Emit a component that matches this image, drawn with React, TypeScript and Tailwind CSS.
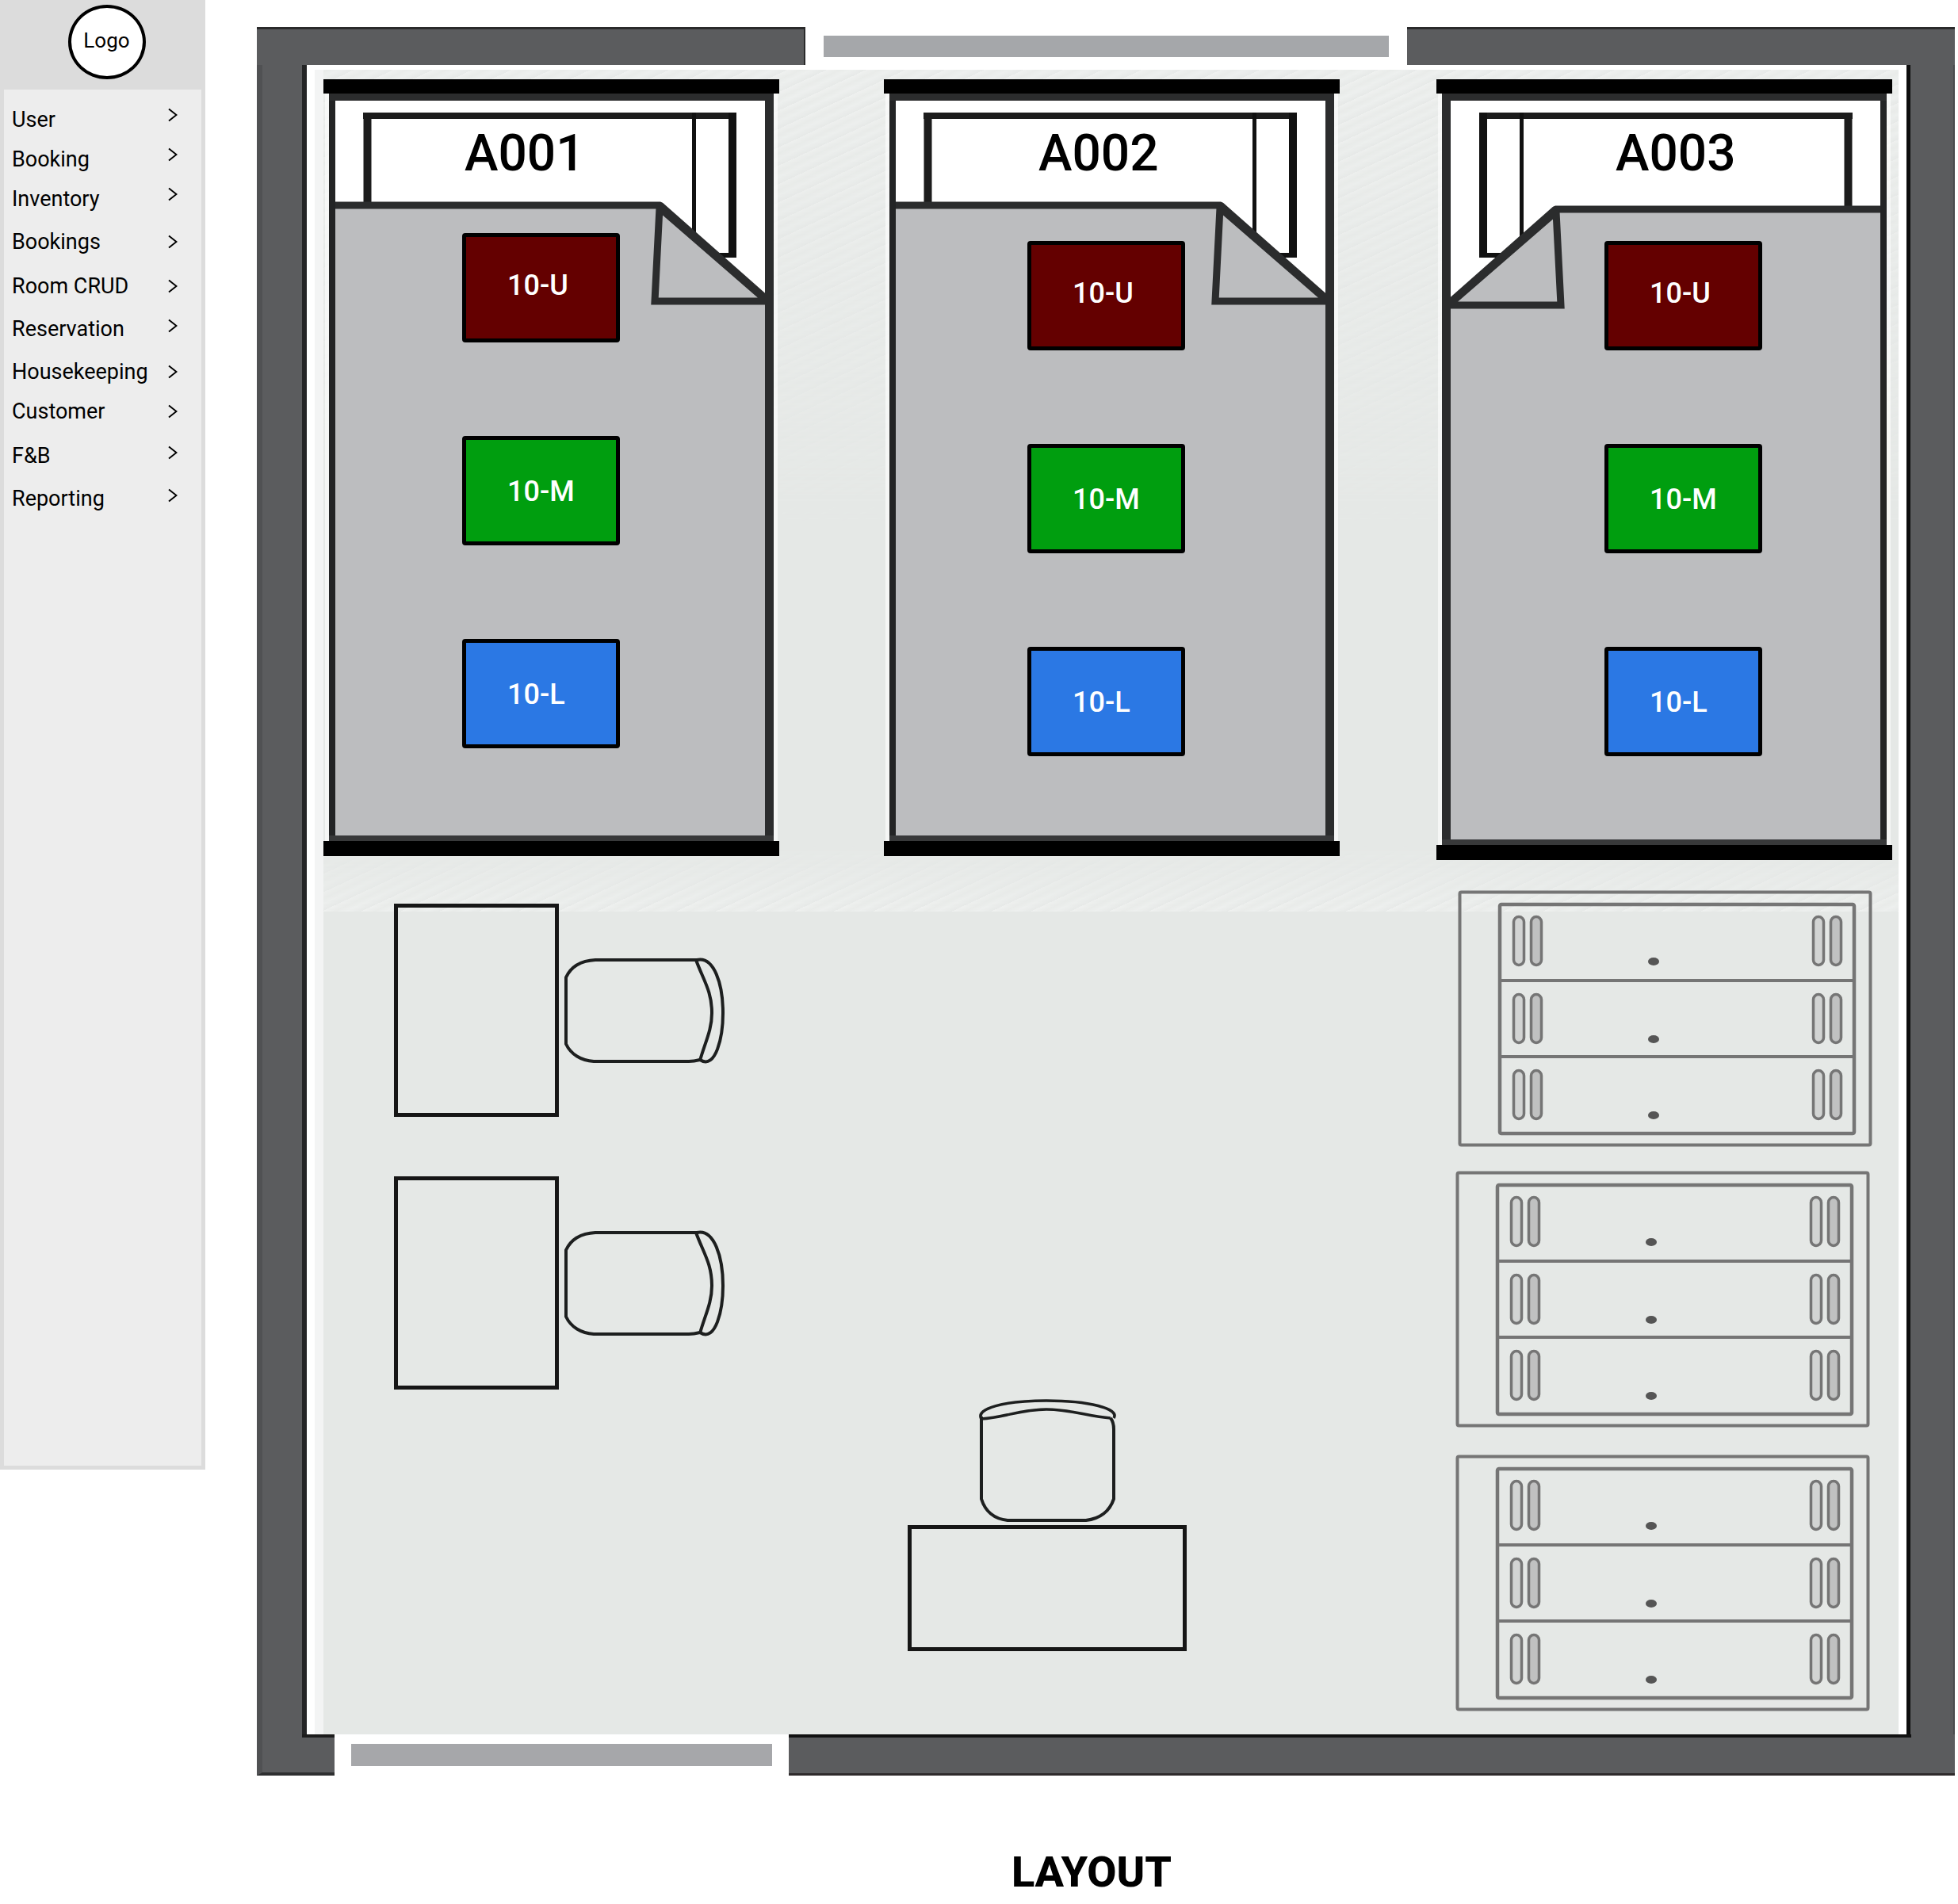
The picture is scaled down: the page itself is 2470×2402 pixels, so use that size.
import React from "react";

type NavItem = { label: string; row: string; chevron: string };

const NAV: NavItem[] = [
  { label: "User", row: "h-[50px]", chevron: "h-5" },
  { label: "Booking", row: "h-[50px]", chevron: "h-5" },
  { label: "Inventory", row: "h-[54px]", chevron: "h-5" },
  { label: "Bookings", row: "h-[56px]", chevron: "h-8" },
  { label: "Room CRUD", row: "h-[54px]", chevron: "h-8" },
  { label: "Reservation", row: "h-[54px]", chevron: "h-6" },
  { label: "Housekeeping", row: "h-[50px]", chevron: "h-8" },
  { label: "Customer", row: "h-[56px]", chevron: "h-8" },
  { label: "F&B", row: "h-[54px]", chevron: "h-6" },
  { label: "Reporting", row: "h-[54px]", chevron: "h-6" },
];

function Chevron() {
  return (
    <svg viewBox="0 0 12 18" className="h-[18px] w-3" fill="none" stroke="#000" strokeWidth="2" aria-hidden="true">
      <path d="M1 1.5 L10.5 9 L1 16.5" />
    </svg>
  );
}

function Sidebar() {
  return (
    <aside className="flex min-h-[1854px] w-[259px] shrink-0 flex-col border-x-[5px] border-b-[5px] border-[#dcdcdc] bg-[#ededed]">
      <header className="flex h-[113px] items-start justify-center bg-[#dcdcdc] pt-[6px] pl-[10px]">
        <div className="flex h-[94px] w-[98px] items-center justify-center rounded-[50%] border-4 border-black bg-white pb-1 text-[26px] leading-8">
          Logo
        </div>
      </header>
      <nav className="pt-[22px]" aria-label="Main">
        <ul>
          {NAV.map((item) => (
            <li key={item.label} className={item.row}>
              <a href="#" className="flex items-start justify-between pr-[30px] pl-[10px] text-[27px] leading-8">
                <span>{item.label}</span>
                <span className={`flex items-center ${item.chevron}`}>
                  <Chevron />
                </span>
              </a>
            </li>
          ))}
        </ul>
      </nav>
    </aside>
  );
}

function BedDrawing({ mirrored }: { mirrored?: boolean }) {
  const s = mirrored ? 5 : 0;
  const h = 980 + s;
  return (
    <svg viewBox={`0 0 575 ${h}`} className="absolute inset-0 size-full" aria-hidden="true">
      <g transform={mirrored ? "translate(575 0) scale(-1 1)" : undefined}>
        <rect x="2" y="0" width="571" height={h} fill="#fff" fillOpacity="0.6" />
        <rect x="7" y="18" width="561" height={h - 30} fill="#2b2c2d" />
        <rect x="15" y="27" width="542" height={h - 54} fill="#fff" />
        <path d="M55.5 165 V46" fill="none" stroke="#1c1c1c" strokeWidth="10" />
        <rect x="50" y="42" width="471" height="8" fill="#1c1c1c" />
        <rect x="465" y="42" width="5" height="176" fill="#111" />
        <rect x="511" y="42" width="10" height="183" fill="#111" />
        <rect x="490" y="219" width="31" height="6" fill="#111" />
        <path d={`M15 ${159 + s} H425 L560 ${280 + s} V${954 + s} H15 Z`} fill="#bcbdbf" />
        <path d={`M15 ${159 + s} H425 L562 ${280 + s}`} fill="none" stroke="#2b2c2d" strokeWidth="9" strokeLinejoin="bevel" />
        <path
          d={`M424 ${162 + s} L418 ${280 + s} H560 Z`}
          fill="#bcbdbf"
          stroke="#2b2c2d"
          strokeWidth="9"
          strokeLinejoin="miter"
          strokeMiterlimit="2"
        />
        <rect x="7" y="27" width="8" height={h - 46} fill="#232425" />
        <rect x="557" y="27" width="11" height={h - 46} fill="#2b2c2d" />
        <rect x="7" y={954 + s} width="561" height="8" fill="#38393a" />
        <rect x="0" y="0" width="575" height="18" fill="#000" />
        <rect x="0" y={961 + s} width="575" height="19" fill="#000" />
      </g>
    </svg>
  );
}

const BERTHS = [
  { label: "10-U", look: "bg-[#640000] pb-2" },
  { label: "10-M", look: "bg-[#009e0f]" },
  { label: "10-L", look: "bg-[#2b78e4]" },
];

type BedProps = {
  name: string;
  mirrored?: boolean;
  size: string;
  title: string;
  berths: string;
};

function Bed({ name, mirrored, size, title, berths }: BedProps) {
  return (
    <article className={`relative w-[575px] ${size}`}>
      <BedDrawing mirrored={mirrored} />
      <div className="relative">
        <h2 className={`pt-14 text-[64px] leading-[76px] font-medium ${title}`}>{name}</h2>
        <div className={`flex flex-col gap-[118px] ${berths}`}>
          {BERTHS.map((b) => (
            <button
              key={b.label}
              type="button"
              className={`flex h-[138px] w-[199px] items-center rounded-[4px] border-[5px] border-black pt-[2px] pl-[52px] text-[36px] font-medium text-white ${b.look}`}
            >
              {b.label}
            </button>
          ))}
        </div>
      </div>
    </article>
  );
}

function SideChair() {
  return (
    <svg viewBox="0 0 204 134" className="h-[134px] w-[204px]" fill="none" stroke="#1d1f1f" strokeWidth="4" aria-hidden="true">
      <path d="M168 3 H40 C22 4 9 12 3 25 V109 C9 122 22 130 38 131 H158 C164 131 168 130 172 129" />
      <path d="M167 3 C176 28 187 42 187 70 C187 92 178 108 172 130" />
      <path d="M168 3 C190 -2 201 34 201 70 C201 100 192 142 172 129" />
    </svg>
  );
}

function FrontChair() {
  return (
    <svg viewBox="0 0 176 158" className="h-[158px] w-[176px]" fill="none" stroke="#1d1f1f" strokeWidth="4" aria-hidden="true">
      <path d="M5 24 V128 C10 144 20 153 38 155 H137 C155 153 167 143 172 128 V40 C172 34 171 30 168 26" />
      <path d="M5 27 C35 25 55 15 87 15 C118 15 140 24 168 26" strokeWidth="3.5" />
      <path d="M5 27 C-3 14 34 4 87 4 C140 4 180 14 172 26" strokeWidth="3.5" />
    </svg>
  );
}

function SideDesk() {
  return (
    <div className="flex items-center gap-[6px]">
      <div className="h-[269px] w-[208px] border-[5px] border-[#161616]" />
      <SideChair />
    </div>
  );
}

const SHELF_TOPS = [32, 130, 226];
const SLOTS = [69, 91, 447, 469];

function Locker() {
  return (
    <svg viewBox="0 0 523 324" className="h-[324px] w-[523px]" fill="none" stroke="#757575" aria-hidden="true">
      <rect x="2.5" y="2.5" width="518" height="319" rx="2" strokeWidth="4" />
      <rect x="53" y="18" width="447" height="289" rx="2" strokeWidth="4.5" />
      <path d="M53 114 H500 M53 210 H500" strokeWidth="4" />
      {SHELF_TOPS.map((y) => (
        <g key={y}>
          {SLOTS.map((x, i) => (
            <rect
              key={x}
              x={x + 1.5}
              y={y + 1.5}
              width="13"
              height="61"
              rx="6.5"
              strokeWidth="3.5"
              fill={i % 2 === 0 ? "#d2d4d3" : "#c0c1c1"}
            />
          ))}
          <ellipse cx="247" cy={y + 58} rx="7" ry="5" fill="#555" stroke="none" />
        </g>
      ))}
    </svg>
  );
}

function Room() {
  return (
    <section aria-label="Room plan">
      {/* Upper wall with the window */}
      <div className="flex h-12">
        <div className="w-[692px] border-t-[3px] border-r-2 border-t-[#2a2a2b] border-r-[#2a2a2b] bg-[#5b5c5e]" />
        <div className="flex flex-1 items-start px-[23px] pt-[11px]">
          <div className="h-[27px] flex-1 bg-[#a5a7aa]" />
        </div>
        <div className="w-[691px] border-t-[3px] border-[#2a2a2b] bg-[#5b5c5e]" />
      </div>

      <div className="flex">
        <div className="w-[63px] shrink-0 border-r-[6px] border-l-[7px] border-r-[#232425] border-l-[#505153] bg-[#5b5c5e]" />

        <div className="relative flex-1 border-x-[10px] border-t-[6px] border-white bg-[#e5e8e6]">
          <div
            aria-hidden="true"
            className="absolute inset-x-0 top-0 h-[1062px] bg-[repeating-linear-gradient(155deg,#f6f7f6_0px,#eceeec_7px,#f3f5f4_13px,#e8eae9_21px)] opacity-60 [mask-image:linear-gradient(to_bottom,#000,transparent_55%,transparent_92%,#000)]"
          />
          <div aria-hidden="true" className="absolute inset-y-0 left-0 w-[11px] bg-[#f3f4f4]" />

          <div className="relative flex items-start justify-between pt-3 pr-2 pl-[11px]">
            <Bed name="A001" size="h-[980px]" title="pl-[178px]" berths="pt-[62px] pl-[175px]" />
            <div className="pl-[10px]">
              <Bed name="A002" size="h-[980px]" title="pl-[195px]" berths="pt-[72px] pl-[181px]" />
            </div>
            <Bed name="A003" size="h-[985px]" title="pl-[226px]" berths="pt-[72px] pl-[212px]" mirrored />
          </div>

          <div className="relative flex justify-between pt-[38px] pr-[33px] pb-[29px] pl-[100px]">
            <div className="flex flex-col gap-[75px] pt-[17px]">
              <SideDesk />
              <SideDesk />
            </div>
            <div className="mr-[109px] flex flex-col items-center justify-end gap-[3px] pb-[76px]">
              <FrontChair />
              <div className="h-[159px] w-[352px] border-[5px] border-[#161616]" />
            </div>
            <div className="flex w-[526px] flex-col">
              <div className="self-end">
                <Locker />
              </div>
              <div className="pt-[30px]">
                <Locker />
              </div>
              <div className="pt-[34px]">
                <Locker />
              </div>
            </div>
          </div>
        </div>

        <div className="w-[61px] shrink-0 border-r-2 border-l-[5px] border-r-[#4a4b4d] border-l-[#0d0d0d] bg-[#5b5c5e]" />
      </div>

      {/* Lower wall with the door */}
      <div className="flex h-[52px]">
        <div className="flex w-[98px] flex-col border-b-4 border-l-[7px] border-b-[#2e2f30] border-l-[#505153] bg-[#5b5c5e]">
          <div className="ml-[50px] h-1 bg-[#1c1c1c]" />
        </div>
        <div className="w-[573px] px-[21px] pt-3">
          <div className="h-7 bg-[#a6a7aa]" />
        </div>
        <div className="flex-1 border-b-[3px] border-[#2e2a2b] bg-[#5b5c5e]">
          <div className="mr-[55px] h-1 bg-[#111]" />
        </div>
      </div>
    </section>
  );
}

export default function App() {
  return (
    <div className="flex min-h-screen items-start bg-white font-[Roboto,'Liberation_Sans',sans-serif] text-black">
      <Sidebar />
      <main className="flex-1 pt-[34px] pr-1 pl-[65px]">
        <Room />
        <h1 className="pt-[90px] pr-[36px] text-center text-[54px] leading-[64px] font-extrabold">LAYOUT</h1>
      </main>
    </div>
  );
}
